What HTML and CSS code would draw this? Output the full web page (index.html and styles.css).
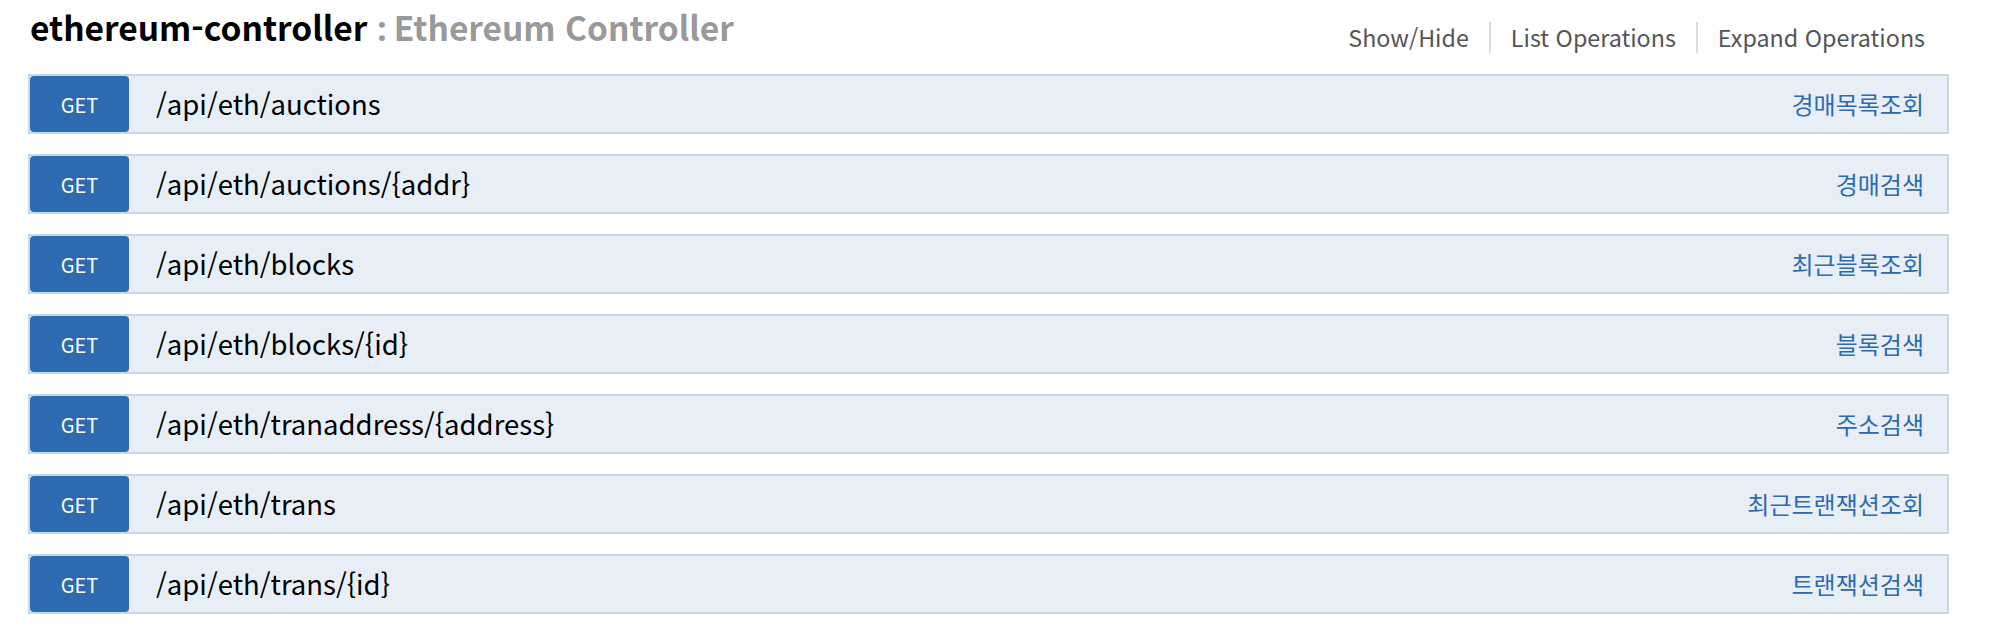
FILE: index.html
```html
<!DOCTYPE html>
<html lang="ko">
<head>
<meta charset="utf-8">
<title>ethereum-controller</title>
<link rel="stylesheet" href="styles.css">
</head>
<body>
<div class="resource">
  <div class="heading">
    <h2 class="title"><span class="name">ethereum-controller</span><span class="desc"><span class="sep">:</span>Ethereum Controller</span></h2>
    <ul class="options">
      <li><a href="#">Show/Hide</a></li>
      <li><a href="#">List Operations</a></li>
      <li><a href="#">Expand Operations</a></li>
    </ul>
  </div>
  <ul class="endpoints">
    <li class="op"><span class="method">GET</span><span class="path">/api/eth/auctions</span><span class="summary">경매목록조회</span></li>
    <li class="op"><span class="method">GET</span><span class="path">/api/eth/auctions/{addr}</span><span class="summary">경매검색</span></li>
    <li class="op"><span class="method">GET</span><span class="path">/api/eth/blocks</span><span class="summary">최근블록조회</span></li>
    <li class="op"><span class="method">GET</span><span class="path">/api/eth/blocks/{id}</span><span class="summary">블록검색</span></li>
    <li class="op"><span class="method">GET</span><span class="path">/api/eth/tranaddress/{address}</span><span class="summary">주소검색</span></li>
    <li class="op"><span class="method">GET</span><span class="path">/api/eth/trans</span><span class="summary">최근트랜잭션조회</span></li>
    <li class="op"><span class="method">GET</span><span class="path">/api/eth/trans/{id}</span><span class="summary">트랜잭션검색</span></li>
  </ul>
</div>
</body>
</html>
```
FILE: styles.css
```css
html, body {
  margin: 0;
  padding: 0;
  background: #ffffff;
}
body {
  font-family: "Noto Sans CJK KR", "Noto Sans", sans-serif;
  color: #000;
}
.resource {
  width: 1921px;
  padding: 0 0 0 28px;
}
.heading {
  display: flex;
  justify-content: space-between;
  align-items: center;
  height: 74px;
}
.title {
  margin: 0;
  padding-left: 2px;
  font-size: 33.5px;
  font-weight: 700;
  line-height: 40px;
  margin-top: -20px;
}
.title .desc {
  color: #999999;
}
.title .sep {
  font-family: "Noto Sans", sans-serif;
  margin: 0 7px 0 10px;
}
.options {
  list-style: none;
  margin: 0;
  padding: 0 24px 0 0;
  display: flex;
  align-items: center;
}
.options li {
  border-left: 2px solid #dddddd;
  padding: 0 20px;
  height: 31px;
  display: flex;
  align-items: center;
}
.options li:first-child {
  border-left: none;
}
.options li:last-child {
  padding-right: 0;
}
.options a {
  color: #555555;
  text-decoration: none;
  font-size: 23.3px;
}
.endpoints {
  list-style: none;
  margin: 0;
  padding: 0;
  display: flex;
  flex-direction: column;
  gap: 20px;
}
.op {
  display: flex;
  align-items: center;
  height: 56px;
  background: #e7eef6;
  border: 2px solid #c5d8ec;
}
.method {
  width: 99px;
  height: 56px;
  border-radius: 4px;
  background: #2d6ab0;
  color: #ffffff;
  font-size: 20px;
  display: flex;
  align-items: center;
  justify-content: center;
}
.path {
  flex: 1;
  padding-left: 27px;
  padding-bottom: 3px;
  font-size: 27.5px;
}
.summary {
  color: #2d6ab0;
  font-size: 24px;
  padding-right: 23px;
  padding-bottom: 2px;
}
```
